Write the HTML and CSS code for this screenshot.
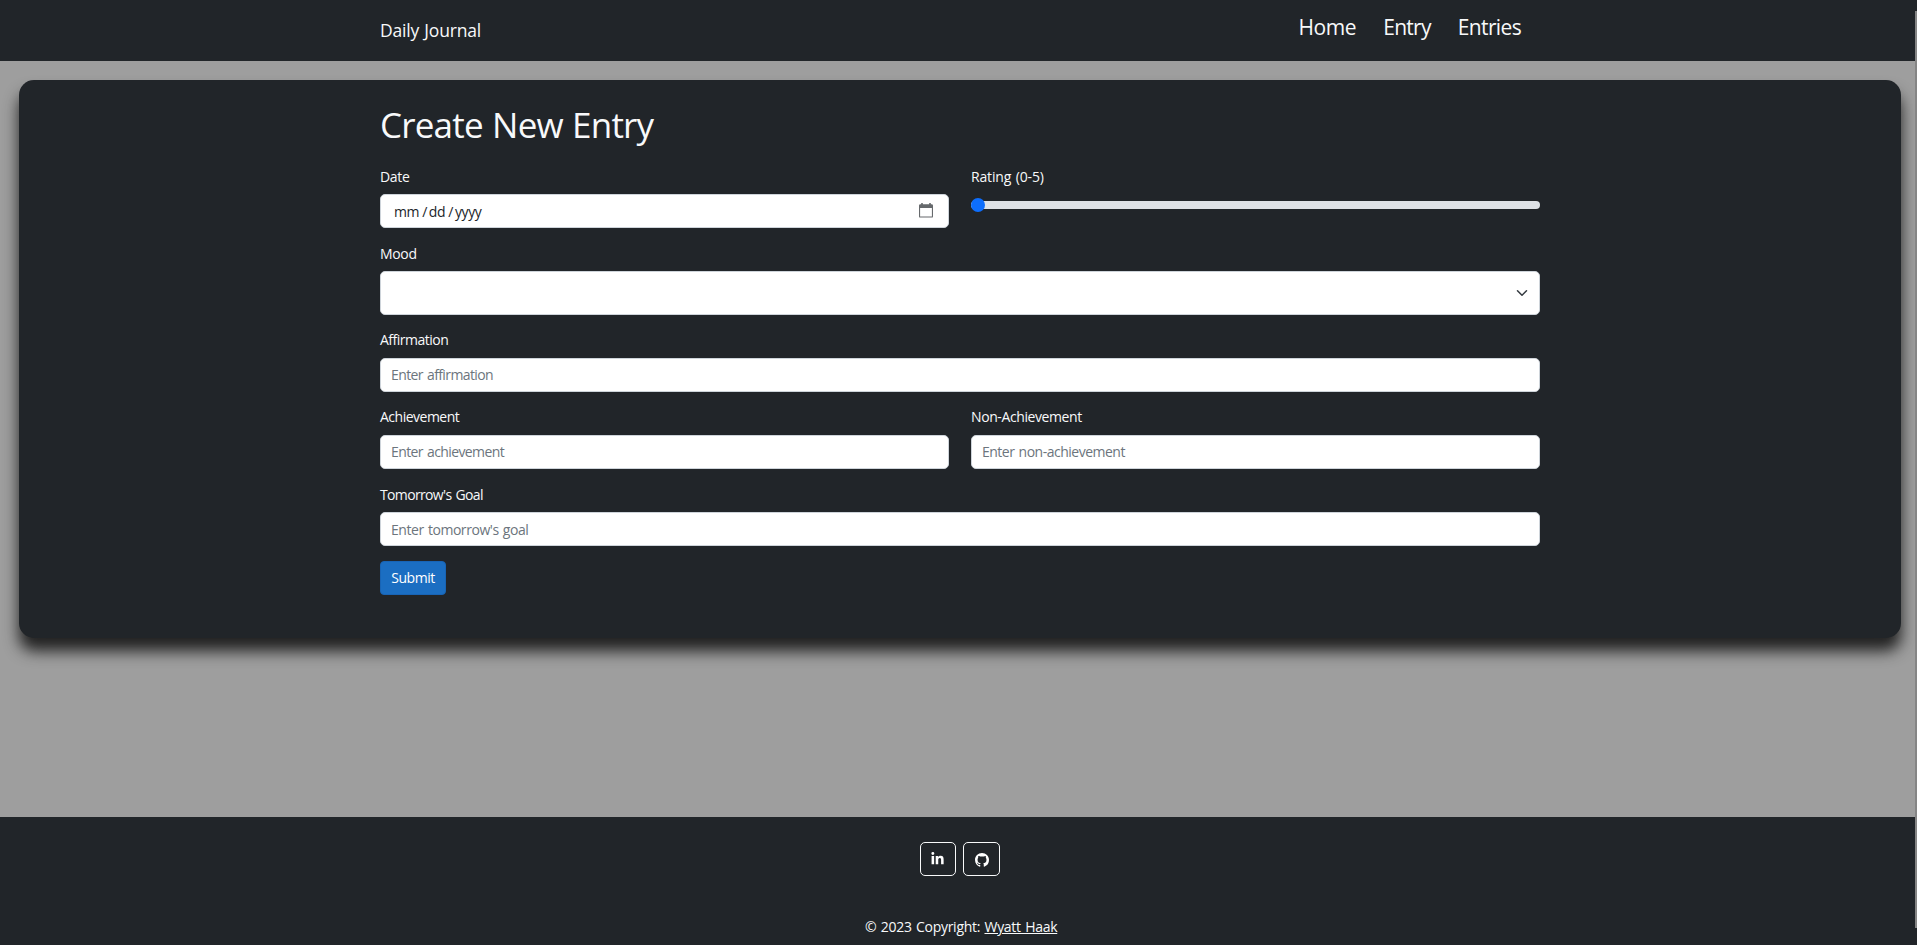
FILE: index.html
```html
<!DOCTYPE html>
<html lang="en">
<head>
<meta charset="utf-8">
<title>Daily Journal</title>
<link rel="stylesheet" href="styles.css">
</head>
<body>
<header class="navbar">
  <div class="container navbar-inner">
    <a class="brand" href="#">Daily Journal</a>
    <nav class="nav">
      <a class="nav-home" href="#">Home</a>
      <a class="nav-entry" href="#">Entry</a>
      <a class="nav-entries" href="#">Entries</a>
    </nav>
  </div>
</header>
<main class="main">
  <section class="card">
    <form class="container form">
      <h1 class="title">Create New Entry</h1>
      <div class="row">
        <div class="field">
          <span class="label l-date">Date</span>
          <div class="control date">
            <span class="date-text"><span>mm</span><span class="slash">/</span><span>dd</span><span class="slash">/</span><span>yyyy</span></span>
            <svg class="calendar" viewBox="0 0 14 15"><path d="M0 2.6Q0 1.2 1.4 1.2H2.2V0H3.8V1.2H10.2V0H11.8V1.2H12.6Q14 1.2 14 2.6V13.4Q14 14.6 12.8 14.6H1.2Q0 14.6 0 13.4ZM1.1 5V13.5H12.9V5Z" fill="#66696c" fill-rule="evenodd"/></svg>
          </div>
        </div>
        <div class="field">
          <span class="label l-rating">Rating (0-5)</span>
          <div class="range"><span class="thumb"></span></div>
        </div>
      </div>
      <div class="field">
        <span class="label l-mood">Mood</span>
        <div class="control select">
          <svg class="chevron" viewBox="0 0 16 16"><path d="m2 5 6 6 6-6" fill="none" stroke="#343a40" stroke-width="2" stroke-linecap="round" stroke-linejoin="round"/></svg>
        </div>
      </div>
      <div class="field">
        <span class="label l-aff">Affirmation</span>
        <input class="control p-aff" placeholder="Enter affirmation">
      </div>
      <div class="row">
        <div class="field">
          <span class="label l-ach">Achievement</span>
          <input class="control p-ach" placeholder="Enter achievement">
        </div>
        <div class="field">
          <span class="label l-non">Non-Achievement</span>
          <input class="control p-non" placeholder="Enter non-achievement">
        </div>
      </div>
      <div class="field">
        <span class="label l-goal">Tomorrow's Goal</span>
        <input class="control p-goal" placeholder="Enter tomorrow's goal">
      </div>
      <button class="submit" type="button">Submit</button>
    </form>
  </section>
</main>
<footer class="footer">
  <div class="social">
    <a class="social-btn" href="#"><svg class="icon-in" viewBox="0 0 448 512"><path fill="#fff" d="M100.28 448H7.400V148.900h92.880zM53.790 108.100C24.090 108.100 0 83.500 0 53.800a53.790 53.790 0 0 1 107.580 0c0 29.700-24.100 54.300-53.790 54.300zM447.900 448h-92.680V302.400c0-34.700-.7-79.200-48.290-79.200-48.290 0-55.690 37.700-55.690 76.700V448h-92.780V148.900h89.080v40.800h1.300c12.400-23.500 42.690-48.300 87.880-48.300 94 0 111.280 61.900 111.280 142.300V448z"/></svg></a>
    <a class="social-btn social-gh" href="#"><svg class="icon-gh" viewBox="0 0 16 16"><path fill="#fff" d="M8 0C3.580 0 0 3.580 0 8c0 3.540 2.290 6.530 5.470 7.590.4.070.55-.17.55-.38 0-.19-.01-.82-.01-1.490-2.010.37-2.530-.49-2.690-.94-.09-.23-.48-.94-.82-1.130-.28-.15-.68-.52-.01-.53.63-.01 1.080.58 1.230.82.720 1.210 1.870.87 2.330.66.070-.52.28-.87.51-1.070-1.780-.2-3.640-.89-3.640-3.950 0-.87.31-1.590.82-2.150-.08-.2-.36-1.020.08-2.120 0 0 .67-.21 2.200.82.640-.18 1.320-.27 2-.27s1.360.09 2 .27c1.530-1.040 2.200-.82 2.200-.82.440 1.100.16 1.920.08 2.120.51.560.82 1.270.82 2.150 0 3.070-1.870 3.750-3.650 3.950.29.25.54.73.54 1.480 0 1.070-.01 1.930-.01 2.200 0 .21.15.46.55.38A8.010 8.010 0 0 0 16 8c0-4.420-3.580-8-8-8z"/></svg></a>
  </div>
  <p class="copyright">© 2023 Copyright: <a href="#">Wyatt Haak</a></p>
</footer>
<div class="scroll-edge"></div>
</body>
</html>
```
FILE: styles.css
```css
* { box-sizing: border-box; }
body {
  margin: 0;
  height: 945px;
  display: flex;
  flex-direction: column;
  overflow: hidden;
  background: #9e9e9e;
  color: #f8f9fa;
  font: 14px/21px "Open Sans", "Noto Sans", sans-serif;
}
a { color: inherit; }
.container { width: 1160px; margin-left: 380px; }
.navbar { height: 61px; background: #212529; flex: none; }
.navbar-inner { display: flex; justify-content: space-between; height: 61px; }
.brand { font-size: 17.5px; line-height: 61px; text-decoration: none; letter-spacing: -0.2px; word-spacing: 1px; }
.nav { display: flex; gap: 27px; padding-right: 19px; line-height: 55px; font-size: 21px; }
.nav a { text-decoration: none; white-space: nowrap; }
.nav-home { letter-spacing: -0.4px; }
.nav-entry { letter-spacing: -0.7px; }
.nav-entries { letter-spacing: -0.65px; }
.main { flex: none; height: 756px; padding: 19px 16px 0 19px; }
.card { height: 558px; border-radius: 15px; background: #212529; box-shadow: 0 13px 15px #222; }
.form { margin-left: 361px; padding-top: 23px; display: flex; flex-direction: column; gap: 15px; }
.title { margin: 0 0 5px; height: 43px; font-size: 35px; line-height: 43px; font-weight: 400; letter-spacing: -0.8px; word-spacing: 1px; }
.row { display: grid; grid-template-columns: 569px 569px; gap: 22px; }
.field { display: flex; flex-direction: column; gap: 7px; }
.label { height: 21px; letter-spacing: -0.45px; white-space: nowrap; align-self: flex-start; }
.l-date, .l-mood { letter-spacing: -0.35px; }
.l-rating { letter-spacing: -0.15px; word-spacing: 1px; }
.l-aff, .l-ach { line-height: 20px; letter-spacing: -0.5px; }
.l-non { line-height: 20px; letter-spacing: -0.4px; }
.l-goal { letter-spacing: -0.65px; word-spacing: 1px; }
.control {
  width: 100%; height: 34px; border: 1px solid #ced4da; border-radius: 5px;
  background: #fff; padding: 0 10px 1px; color: #212529; font: inherit; letter-spacing: -0.6px; word-spacing: 1px;
}
.control::placeholder { color: #6c757d; opacity: 1; }
.p-non { letter-spacing: -0.5px; }
.p-goal { padding-bottom: 0; letter-spacing: -0.45px; }
.date { display: flex; align-items: center; justify-content: space-between; padding: 0 15px 2px 13px; letter-spacing: -0.4px; }
.date-text { display: flex; gap: 2px; padding-top: 2px; }
.slash { padding-left: 1px; }
.calendar { width: 14px; height: 15px; }
.range { height: 8px; margin-top: 7px; border-radius: 4px; background: #dee2e6; display: flex; align-items: center; }
.thumb { width: 14px; height: 14px; border-radius: 50%; background: #0d6efd; }
.select { height: 44px; display: flex; align-items: center; justify-content: flex-end; }
.chevron { width: 12px; height: 12px; margin-right: 1px; }
.submit {
  width: 66px; height: 34px; padding: 0 0 1px; border: 1px solid #1864b5; border-radius: 4px;
  background: #1b6ec2; color: #fff; font: inherit; letter-spacing: -0.45px;
}
.footer { flex: none; height: 128px; padding-top: 25px; background: #212529; display: flex; flex-direction: column; gap: 40px; }
.social { display: flex; gap: 7px; margin-left: 920px; }
.social-btn { width: 36px; height: 34px; border: 1px solid #f8f9fa; border-radius: 5px; display: flex; align-items: center; justify-content: center; }
.social-gh { width: 37px; }
.icon-in { width: 13px; height: 14px; margin-right: 1px; }
.icon-gh { width: 14px; height: 14px; margin-top: 1px; }
.copyright { margin: 0 0 0 865px; letter-spacing: -0.28px; word-spacing: 1px; white-space: nowrap; }
.scroll-edge { position: absolute; right: 0; top: 0; width: 2px; height: 945px; background: linear-gradient(#212529 11px, #858585 11px, #858585 928px, #212529 928px); }
```
